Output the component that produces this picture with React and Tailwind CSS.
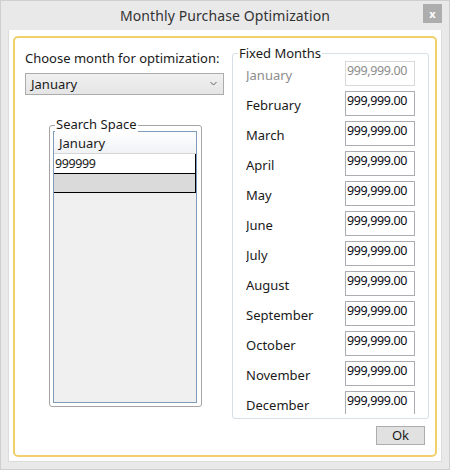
import React from "react";

const months = [
  "January","February","March","April","May","June","July","August","September","October","November","December",
];

function Row({ name, disabled }) {
  return (
    <div className="flex h-[25px] shrink-0 items-center justify-between mb-[5px]">
      <span className={`pt-[3px] leading-[18px] ${disabled ? "text-[#8d8d8d]" : "text-[#1a1a1a]"}`}>{name}</span>
      <div
        className={`h-[25px] w-[70px] border bg-white pl-[1px] text-[12.5px] tracking-[-0.4px] leading-[17px] ${
          disabled ? "border-[#d9d9d9] text-[#8d8d8d]" : "border-[#abadb3] text-[#0a0a14]"
        }`}
      >
        999,999.00
      </div>
    </div>
  );
}

export default function App() {
  return (
    <div
      className="flex h-[470px] w-[450px] flex-col border border-[#cfcfcf] bg-[#e9e9e9] text-[13px] text-[#1a1a1a]"
      style={{ fontFamily: '"Segoe UI", "Noto Sans", sans-serif' }}
    >
      <div className="grid h-[29px] shrink-0 grid-cols-[1fr_auto_1fr] items-center">
        <div />
        <div className="text-[14px] tracking-[0.1px] text-[#333] leading-[20px] pt-[1px]">Monthly Purchase Optimization</div>
        <div className="flex justify-end pr-[7px] pb-[4px]">
          <div className="flex h-[19px] w-[19px] items-center justify-center bg-[#adadad] text-[11px] font-bold leading-none text-white">
            x
          </div>
        </div>
      </div>
      <div className="mx-[7px] mb-[8px] flex-1 border border-t-0 border-[#dcdcdc] bg-white px-[4px] pt-[6px] pb-[4px]">
        <div className="flex h-[421px] flex-col rounded-[5px] border-2 border-[#f1d06c]">
          <div className="flex">
            <div className="ml-[10px] w-[199px] shrink-0">
              <div className="mt-[11px] h-[18px] leading-[18px]">Choose month for optimization:</div>
              <div className="mt-[6px] flex h-[22px] items-center justify-between border border-[#acacac] bg-gradient-to-b from-[#f0f0f0] to-[#e5e5e5] pl-[5px] pr-[6px]">
                <span className="leading-[18px]">January</span>
                <svg width="7" height="5" viewBox="0 0 7 5" className="mb-[1px]">
                  <polyline points="0.5,1 3.5,4 6.5,1" fill="none" stroke="#606060" strokeWidth="1" />
                </svg>
              </div>
              <div className="relative ml-[24px] mt-[30px] h-[282px] w-[153px] rounded-[3px] border border-[#a5a5a5] pl-[3px] pr-[4px] pt-[5px] pb-[3px]">
                <span className="absolute left-[5px] top-[-11px] bg-white px-[1px] leading-[18px]">Search Space</span>
                <div className="flex h-full flex-col border border-[#7f9db9] bg-[#f0f0f0]">
                  <div className="h-[22px] shrink-0 border-b border-[#d5d5d5] bg-gradient-to-b from-[#ffffff] to-[#f0f2f5] pl-[5px] leading-[22px]">
                    January
                  </div>
                  <div className="h-[20px] w-[142px] shrink-0 border-r border-b border-black bg-white pl-[1px] text-[12.5px] tracking-[-0.4px] leading-[19px]">
                    999999
                  </div>
                  <div className="h-[19px] w-[142px] shrink-0 border-r border-b border-black bg-[#dadada]" />
                </div>
              </div>
            </div>
            <div className="relative ml-[8px] mt-[15px] h-[366px] w-[197px] rounded-[3px] border border-[#d5dfe5] pl-[13px] pr-[13px] pt-[7px] pb-[4px]">
              <span className="absolute left-[5px] top-[-10px] bg-white px-[1px] leading-[18px]">Fixed Months</span>
              <div className="flex h-full flex-col overflow-hidden">
                {months.map((m, i) => (
                  <Row key={m} name={m} disabled={i === 0} />
                ))}
              </div>
            </div>
          </div>
          <div className="mt-[7px] flex justify-end pr-[10px]">
            <div className="flex h-[19px] w-[49px] items-center justify-center border border-[#adadad] bg-[#e1e1e1] leading-[17px]">
              Ok
            </div>
          </div>
        </div>
      </div>
    </div>
  );
}
